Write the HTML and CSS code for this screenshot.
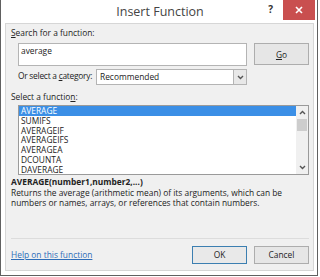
FILE: index.html
```html
<!DOCTYPE html>
<html>
<head>
<meta charset="utf-8">
<link rel="stylesheet" href="styles.css">
</head>
<body>
<div class="window">
  <div class="titlebar">
    <div></div>
    <div class="title">Insert Function</div>
    <div class="controls">
      <span class="help">?</span>
      <span class="close"><svg width="8" height="8" viewBox="0 0 8 8"><path d="M1 1L7 7M7 1L1 7" stroke="#fff" stroke-width="1.6"/></svg></span>
    </div>
  </div>
  <div class="panel">
    <div class="label search-label"><u>S</u>earch for a function:</div>
    <div class="search-row">
      <div class="input">average</div>
      <div class="btn go"><u>G</u>o</div>
    </div>
    <div class="cat-row">
      <span class="cat-label">Or select a <u>c</u>ategory:</span>
      <div class="select">
        <span class="select-text">Recommended</span>
        <span class="select-btn"><svg width="7" height="5" viewBox="0 0 7 5"><path d="M1 1L3.5 3.5L6 1" stroke="#555" stroke-width="1.4" fill="none"/></svg></span>
      </div>
    </div>
    <div class="label fn-label">Select a functio<u>n</u>:</div>
    <div class="listbox">
      <div class="items">
        <div class="item selected">AVERAGE</div>
        <div class="item">SUMIFS</div>
        <div class="item">AVERAGEIF</div>
        <div class="item">AVERAGEIFS</div>
        <div class="item">AVERAGEA</div>
        <div class="item">DCOUNTA</div>
        <div class="item">DAVERAGE</div>
      </div>
      <div class="scrollbar">
        <span class="arrow"><svg width="7" height="5" viewBox="0 0 7 5"><path d="M1 4L3.5 1.5L6 4" stroke="#555" stroke-width="1.4" fill="none"/></svg></span>
        <span class="thumb"></span>
        <span class="track"></span>
        <span class="arrow"><svg width="7" height="5" viewBox="0 0 7 5"><path d="M1 1L3.5 3.5L6 1" stroke="#555" stroke-width="1.4" fill="none"/></svg></span>
      </div>
    </div>
    <div class="signature">AVERAGE(number1,number2,...)</div>
    <div class="desc">Returns the average (arithmetic mean) of its arguments, which can be<br>numbers or names, arrays, or references that contain numbers.</div>
    <div class="spacer"></div>
    <div class="separator"></div>
    <div class="footer">
      <a class="link">Help on this function</a>
      <div class="buttons">
        <div class="btn ok">OK</div>
        <div class="btn cancel">Cancel</div>
      </div>
    </div>
  </div>
</div>
</body>
</html>
```
FILE: styles.css
```css
html, body {
  margin: 0;
  padding: 0;
  background: #fff;
}
body {
  font-family: "Open Sans", "Noto Sans", sans-serif;
  color: #222;
  font-size: 8.4px;
}
.window {
  width: 318px;
  height: 276px;
  box-sizing: border-box;
  border: 1px solid #606060;
  border-top: 0;
  background: #fff;
  display: flex;
  flex-direction: column;
}
.titlebar {
  height: 23px;
  display: grid;
  grid-template-columns: 1fr auto 1fr;
  align-items: start;
}
.title {
  font-size: 12.5px;
  color: #444;
  line-height: 23px;
  padding-left: 2px;
}
.controls {
  display: flex;
  justify-content: flex-end;
  align-items: start;
  padding-right: 2px;
}
.help {
  font-size: 10px;
  font-weight: bold;
  color: #333;
  margin-right: 10px;
  line-height: 18px;
}
.close {
  width: 32px;
  height: 20px;
  background: #c94f4f;
  display: flex;
  align-items: center;
  justify-content: center;
}
.panel {
  flex: 1;
  margin: 0 3px 4px 4px;
  background: #f0f0f0;
  border: 1px solid #d6d6d6;
  padding: 0 4px 0 5px;
  display: flex;
  flex-direction: column;
  white-space: nowrap;
}
.label {
  line-height: 12px;
}
.search-label {
  margin-top: 3px;
}
.search-row {
  margin-top: 4px;
  display: flex;
  align-items: start;
}
.input {
  margin-left: 7px;
  width: 229px;
  height: 23px;
  box-sizing: border-box;
  background: #fff;
  border: 1px solid #b4b4b4;
  padding: 1px 2px;
  line-height: 12px;
}
.btn {
  box-sizing: border-box;
  background: #e6e6e6;
  border: 1px solid #adadad;
  display: flex;
  align-items: center;
  justify-content: center;
}
.go {
  margin-left: 7px;
  margin-top: 0;
  width: 55px;
  height: 22px;
}
.cat-row {
  margin-top: 3px;
  margin-left: 7px;
  display: flex;
  align-items: center;
}
.cat-label {
  width: 78px;
  line-height: 12px;
  margin-top: -3px;
  letter-spacing: -0.25px;
}
.select {
  width: 151px;
  height: 16px;
  box-sizing: border-box;
  background: #fff;
  border: 1px solid #b4b4b4;
  display: flex;
  align-items: stretch;
}
.select-text {
  flex: 1;
  padding-left: 3px;
  line-height: 13px;
}
.select-btn {
  width: 12px;
  background: #e8e8e8;
  border-left: 1px solid #b4b4b4;
  display: flex;
  align-items: center;
  justify-content: center;
}
.fn-label {
  margin-top: 6px;
}
.listbox {
  margin-top: 2px;
  margin-left: 7px;
  width: 291px;
  height: 70px;
  box-sizing: border-box;
  border: 1px solid #9a9a9a;
  background: #fff;
  display: flex;
}
.items {
  flex: 1;
  display: flex;
  flex-direction: column;
}
.item {
  height: 9.8px;
  line-height: 9.8px;
  padding-left: 2px;
  color: #222;
}
.item.selected {
  background: #3b8fe6;
  color: #fff;
}
.scrollbar {
  width: 12px;
  background: #f0f0f0;
  display: flex;
  flex-direction: column;
  align-items: center;
}
.arrow {
  height: 13px;
  display: flex;
  align-items: center;
  justify-content: center;
}
.thumb {
  width: 10px;
  height: 12px;
  background: #cdcdcd;
}
.track {
  flex: 1;
}
.signature {
  margin-top: 1px;
  font-weight: bold;
  line-height: 12px;
}
.desc {
  margin-top: 0;
  line-height: 10px;
}
.spacer {
  flex: 1;
}
.separator {
  height: 1px;
  background: #dcdcdc;
}
.footer {
  height: 31px;
  display: flex;
  align-items: center;
  justify-content: space-between;
}
.link {
  color: #2e6db8;
  text-decoration: underline;
  line-height: 12px;
}
.buttons {
  display: flex;
  gap: 7px;
}
.ok, .cancel {
  width: 55px;
  height: 18px;
}
.ok {
  border-color: #3c7fb1;
  background: #e9e9e9;
}
```
